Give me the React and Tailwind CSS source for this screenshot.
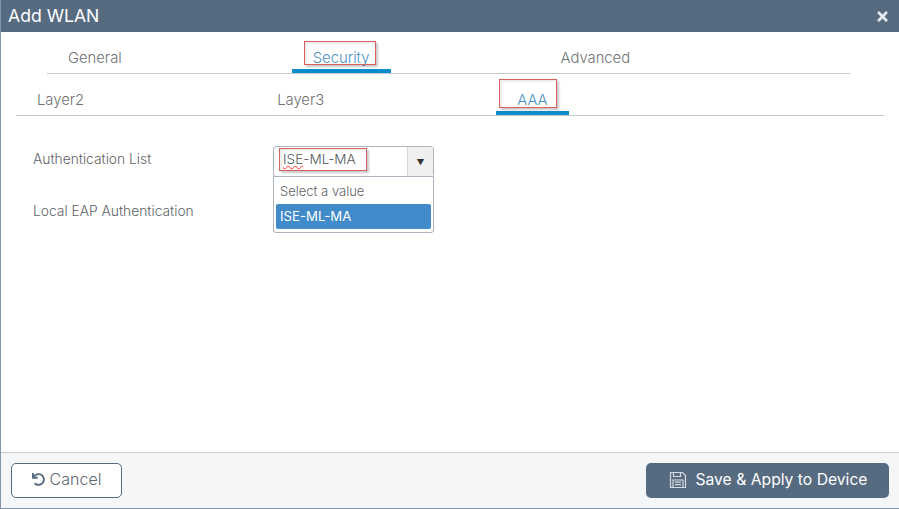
import React from 'react'
import { FaTimes, FaUndo } from 'react-icons/fa'

function SaveIcon() {
  return (
    <svg width="18" height="18" viewBox="0 0 18 18" fill="none" stroke="#d5dbe2" strokeWidth="1.2">
      <path d="M1.5 1.5h12l3 3v12h-15z" />
      <path d="M4.5 1.5v4h7v-4" />
      <path d="M4 9h10v7.5H4z" />
      <path d="M6 11.2h6M6 13.6h6" />
    </svg>
  )
}

// red boxes drawn over the screenshot as annotations
function Callout({ className }) {
  return <div className={`absolute border border-[#d9605c] shadow-[2px_2px_2px_rgba(0,0,0,0.22),inset_2px_2px_2px_rgba(0,0,0,0.08)] ${className}`} />
}

function Tab({ label, active, className }) {
  return (
    <div className={`relative px-[21px] h-full flex items-center ${active ? 'text-[#4a90c2]' : 'text-[#6f7275]'} ${className || ''}`}>
      {label}
      {active && <div className="absolute left-0 right-0 bottom-0 h-[4px] bg-[#0d8ccb]" />}
    </div>
  )
}

export default function App() {
  return (
    <div className="relative w-[899px] h-[509px] flex flex-col bg-white border-l border-b border-[#8296ab] font-['Inter',sans-serif] font-light text-[14.8px] text-[#5f6367] overflow-hidden">
      <header className="h-[32px] -ml-px shrink-0 bg-[#566a80] flex items-center justify-between pl-[8px] pr-[9px] text-white">
        <span className="text-[17.6px] font-normal">Add WLAN</span>
        <FaTimes className="text-[15px] text-[#e6e9ed]" />
      </header>

      <main className="flex-1 min-h-0 relative">
        <nav className="ml-[46px] w-[803px] h-[42px] flex items-end gap-[149px] border-b border-[#c6c8ca]">
          <Tab label="General" className="pt-[11px]" />
          <Tab label="Security" active className="pt-[11px]" />
          <Tab label="Advanced" className="pt-[11px]" />
        </nav>
        <nav className="ml-[15px] w-[868px] h-[42px] flex items-end gap-[151px] border-b border-[#c6c8ca]">
          <Tab label="Layer2" className="pt-[11px]" />
          <Tab label="Layer3" className="pt-[11px]" />
          <Tab label="AAA" active className="pt-[11px]" />
        </nav>

        <div className="pl-[32px] pt-[30px] flex flex-col gap-[24px] text-[13.8px]">
          <div className="flex h-[31px]">
            <label className="w-[240px] leading-[27px]">Authentication List</label>
            <div className="relative w-[161px] h-[31px] flex border border-[#a9b4bf] rounded-[3px] bg-white">
              <div className="flex-1 pl-[9px] leading-[24px] text-[#55595d] text-[13.6px]">
                <span className="underline decoration-wavy decoration-red-500 decoration-1">ISE</span>-ML-MA
              </div>
              <div className="w-[26px] bg-[#efefef] border-l border-[#d5d8db] flex items-center justify-center text-[8px] text-[#333]">▼</div>
              <div className="absolute left-[-1px] top-[29px] w-[161px] h-[57px] border border-[#a9b4bf] rounded-b-[3px] bg-white p-[2px] text-[13px] z-10">
                <div className="h-[25px] pl-[4px] leading-[24px]">Select a value</div>
                <div className="h-[25px] pl-[4px] leading-[25px] text-[13.2px] font-normal bg-[#428bca] text-white rounded-[2px]">ISE-ML-MA</div>
              </div>
            </div>
          </div>
          <div className="h-[20px] flex items-center">
            <label>Local EAP Authentication</label>
          </div>
        </div>

        <Callout className="left-[303px] top-[9px] w-[72px] h-[24px]" />
        <Callout className="left-[498px] top-[47px] w-[58px] h-[29px]" />
        <Callout className="left-[278px] top-[116px] w-[88px] h-[23px] z-20" />
      </main>

      <footer className="h-[56px] shrink-0 border-t border-[#c6ccd2] bg-[#f5f6f7] flex items-center justify-between pl-[10px] pr-[10px] font-normal">
        <button className="w-[111px] h-[35px] border border-[#566a80] rounded-[5px] bg-white flex items-center justify-center gap-[5px] text-[16px] font-light text-[#5d6975] pb-[3px]">
          <FaUndo className="text-[13px] text-[#566a80]" />
          Cancel
        </button>
        <button className="w-[243px] h-[35px] rounded-[5px] bg-[#566a80] flex items-center justify-center gap-[8px] text-[15.7px] text-white pb-[2px] pl-[2px]">
          <SaveIcon />
          Save &amp; Apply to Device
        </button>
      </footer>
    </div>
  )
}
